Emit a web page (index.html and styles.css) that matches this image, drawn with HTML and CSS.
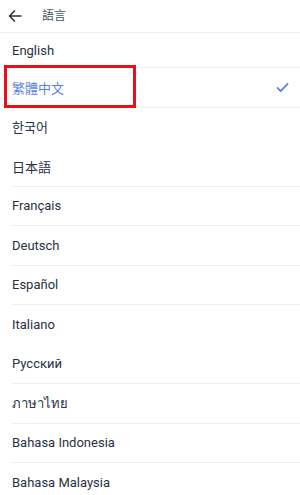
FILE: index.html
```html
<html lang="zh-Hant">
<head>
  <meta charset="UTF-8" />
  <meta name="viewport" content="width=device-width, initial-scale=1.0" />
  <title>語言</title>
  <link rel="stylesheet" href="styles.css">
</head>
<body>
  <div class="screen">
    <div class="header">
      <button class="back-button">
        <svg width="16" height="16" viewBox="0 0 16 16">
          <path d="M14 8H2.5M7.5 3L2.5 8l5 5" fill="none" stroke="#2b3242" stroke-width="1.6" stroke-linecap="round" stroke-linejoin="round"/>
        </svg>
      </button>
      <div class="title">語言</div>
    </div>

    <div class="lang-list">
      <div class="lang-item first">English</div>
      <div class="lang-item selected">
        <span>繁體中文</span>
        <svg class="check" width="13" height="11" viewBox="0 0 14 12">
          <path d="M1.5 6.5l3.5 3.5L12.5 2" fill="none" stroke="#5b7fe0" stroke-width="1.9" stroke-linecap="round" stroke-linejoin="round"/>
        </svg>
        <div class="mark"></div>
      </div>
      <div class="lang-item no-line">한국어</div>
      <div class="lang-item">日本語</div>
      <div class="lang-item">Français</div>
      <div class="lang-item">Deutsch</div>
      <div class="lang-item">Español</div>
      <div class="lang-item no-line">Italiano</div>
      <div class="lang-item">Русский</div>
      <div class="lang-item">ภาษาไทย</div>
      <div class="lang-item">Bahasa Indonesia</div>
      <div class="lang-item">Bahasa Malaysia</div>
    </div>
  </div>
</body>
</html>
```

FILE: styles.css
```css
    :root {
      --text: #283143;
      --blue: #5b7fe0;
      --line: #eeeff1;
    }

    body {
      margin: 0;
      font-family: Roboto, "Noto Sans CJK TC", "Noto Sans", sans-serif;
      background: #fff;
      color: var(--text);
      overflow: hidden;
    }

    .screen {
      width: 300px;
    }

    .header {
      height: 32px;
      display: flex;
      align-items: center;
      border-bottom: 1px solid var(--line);
    }

    .back-button {
      width: 30px;
      height: 32px;
      padding: 0 0 0 7px;
      border: none;
      background: transparent;
      display: flex;
      align-items: center;
    }

    .title {
      margin-left: 12px;
      font-size: 12px;
      color: #4a5262;
      margin-top: -3px;
    }

    .lang-item {
      position: relative;
      height: 38.5px;
      margin-left: 11px;
      padding-left: 1px;
      padding-right: 11px;
      display: flex;
      align-items: center;
      justify-content: space-between;
      font-size: 13px;
      border-bottom: 1px solid var(--line);
    }

    .lang-item.first {
      height: 34px;
    }

    .lang-item.no-line {
      border-bottom-color: transparent;
    }

    .lang-item.selected {
      color: var(--blue);
    }

    .mark {
      position: absolute;
      left: -7px;
      top: -3px;
      width: 126px;
      height: 37px;
      border: 3px solid #e8101a;
    }
```
